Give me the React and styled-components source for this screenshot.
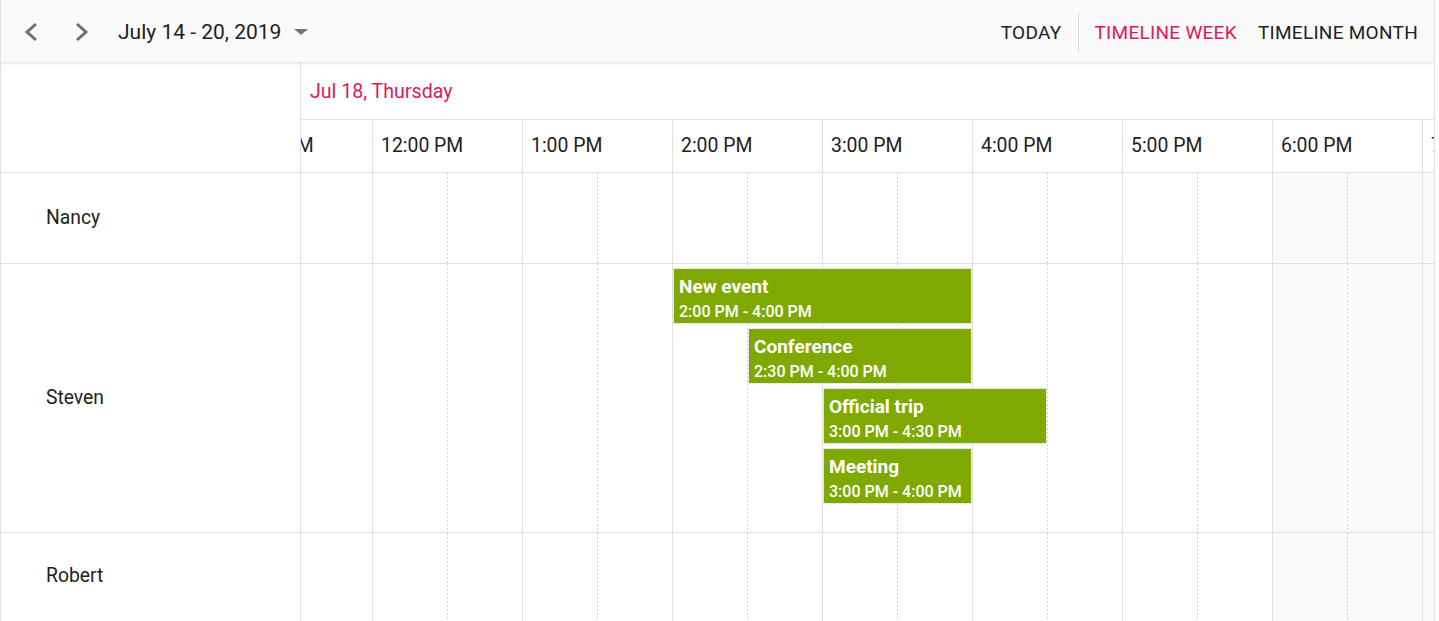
import React from "react";
import styled, { createGlobalStyle } from "styled-components";

const Global = createGlobalStyle`
  html, body { margin: 0; padding: 0; background: #fff; }
  body { font-family: Roboto, "Noto Sans", "Liberation Sans", sans-serif; color: #212121; }
  * { box-sizing: border-box; }
`;

const HOUR_W = 150;
const TRACK_OFFSET = 79;
const HOURS = ["11:00 AM", "12:00 PM", "1:00 PM", "2:00 PM", "3:00 PM", "4:00 PM", "5:00 PM", "6:00 PM", "7:00 PM", "8:00 PM"];
const OFF_FROM = 7; // index of 6:00 PM – non-working hours

const ROWS = [
  { name: "Nancy", height: 91, pb: 2 },
  { name: "Steven", height: 269, pb: 2 },
  { name: "Robert", height: 96, pb: 10 },
];

const EVENTS = [
  { subject: "New event", time: "2:00 PM - 4:00 PM", start: 3, dur: 2 },
  { subject: "Conference", time: "2:30 PM - 4:00 PM", start: 3.5, dur: 1.5 },
  { subject: "Official trip", time: "3:00 PM - 4:30 PM", start: 4, dur: 1.5 },
  { subject: "Meeting", time: "3:00 PM - 4:00 PM", start: 4, dur: 1 },
];

const Scheduler = styled.div`
  width: 1435px;
  height: 621px;
  border-left: 1px solid #e0e0e0;
  border-right: 1px solid #e0e0e0;
  overflow: hidden;
  display: flex;
  flex-direction: column;
`;

const Toolbar = styled.div`
  position: relative;
  z-index: 2;
  height: 62px;
  flex: none;
  background: #fafafa;
  box-shadow: 0 1px 3px rgba(0, 0, 0, 0.14);
  display: flex;
  align-items: center;
  padding-top: 2px;
`;

const NavButton = styled.button`
  border: none;
  background: transparent;
  padding: 0;
  margin: 0 0 0 ${(p) => p.$ml}px;
  width: 14px;
  height: 20px;
  display: flex;
  align-items: center;
  justify-content: center;
  cursor: pointer;
`;

const DateRange = styled.div`
  margin-left: 29px;
  font-size: 21px;
  color: #212121;
  display: flex;
  align-items: center;
`;

const Caret = styled.span`
  margin-left: 13px;
  width: 0;
  height: 0;
  border-left: 7px solid transparent;
  border-right: 7px solid transparent;
  border-top: 6px solid #757575;
`;

const Spacer = styled.div`
  flex: 1;
`;

const ViewButton = styled.button`
  border: none;
  background: transparent;
  font-family: Roboto, "Liberation Sans", sans-serif;
  font-size: 19px;
  letter-spacing: 0.28px;
  text-transform: uppercase;
  padding: 0;
  margin-right: ${(p) => p.$mr}px;
  color: ${(p) => (p.$active ? "#e3165b" : "#212121")};
  cursor: pointer;
`;

const Separator = styled.div`
  width: 1px;
  height: 41px;
  background: #dcdcdc;
  margin-right: 16px;
`;

const Body = styled.div`
  flex: 1;
  display: flex;
  min-height: 0;
`;

const LeftColumn = styled.div`
  width: 300px;
  flex: none;
  border-right: 1px solid #e0e0e0;
  display: flex;
  flex-direction: column;
`;

const Corner = styled.div`
  height: 111px;
  flex: none;
  border-bottom: 1px solid #e0e0e0;
`;

const ResourceCell = styled.div`
  height: ${(p) => p.$h}px;
  flex: none;
  border-bottom: 1px solid #e0e0e0;
  display: flex;
  align-items: center;
  padding: 0 0 ${(p) => p.$pb}px 45px;
  font-size: 19.3px;
  color: #212121;
`;

const RightPane = styled.div`
  flex: 1;
  min-width: 0;
  overflow: hidden;
  display: flex;
  flex-direction: column;
`;

const DateRow = styled.div`
  height: 58px;
  flex: none;
  border-bottom: 1px solid #e0e0e0;
  display: flex;
  align-items: center;
  padding: 2px 0 0 9px;
  font-size: 19.6px;
  color: #e3165b;
`;

const Track = styled.div`
  margin-left: -${TRACK_OFFSET}px;
  width: ${HOURS.length * HOUR_W}px;
  position: relative;
  display: flex;
  flex: none;
  height: ${(p) => p.$h}px;
  border-bottom: 1px solid #e0e0e0;
`;

const TimeCell = styled.div`
  width: ${HOUR_W}px;
  flex: none;
  border-left: 1px solid #e0e0e0;
  padding: 0 0 2px 8px;
  display: flex;
  align-items: center;
  font-size: 19.4px;
  color: #212121;
  white-space: nowrap;
`;

const HalfCell = styled.div`
  width: ${HOUR_W / 2}px;
  flex: none;
  background-color: ${(p) => (p.$off ? "#fafafa" : "#fff")};
  ${(p) =>
    p.$half
      ? `background-image: repeating-linear-gradient(to bottom, #d2d2d2 0, #d2d2d2 2px, transparent 2px, transparent 4px);
         background-size: 1px 100%;
         background-repeat: no-repeat;`
      : `border-left: 1px solid #e0e0e0;`}
`;

const Event = styled.div`
  position: absolute;
  background: #7fa900;
  border: 1px solid #e6e8f2;
  color: #fff;
  padding: 5px 0 0 5px;
  display: flex;
  flex-direction: column;
  overflow: hidden;
`;

const Subject = styled.div`
  font-size: 19px;
  font-weight: 700;
  line-height: 26px;
  white-space: nowrap;
`;

const EventTime = styled.div`
  margin-top: 2px;
  font-size: 16px;
  font-weight: 500;
  line-height: 20px;
  white-space: nowrap;
`;

const Chevron = ({ dir }) => (
  <svg width="14" height="20" viewBox="0 0 14 20">
    <path
      d={dir === "left" ? "M12 2 L3 10 L12 18" : "M2 2 L11 10 L2 18"}
      fill="none"
      stroke="#6f6f6f"
      strokeWidth="3"
      strokeLinejoin="miter"
    />
  </svg>
);

function Row({ height, events }) {
  const cells = [];
  HOURS.forEach((_, i) => {
    cells.push(<HalfCell key={`${i}a`} $off={i >= OFF_FROM} />);
    cells.push(<HalfCell key={`${i}b`} $half $off={i >= OFF_FROM} />);
  });
  return (
    <Track $h={height}>
      {cells}
      {events &&
        events.map((e, idx) => (
          <Event
            key={e.subject}
            style={{
              left: e.start * HOUR_W + 1,
              width: e.dur * HOUR_W - 1,
              top: 4 + idx * 60,
              height: 56,
            }}
          >
            <Subject>{e.subject}</Subject>
            <EventTime>{e.time}</EventTime>
          </Event>
        ))}
    </Track>
  );
}

export default function App() {
  return (
    <>
      <Global />
      <Scheduler>
        <Toolbar>
          <NavButton $ml={23} aria-label="Previous">
            <Chevron dir="left" />
          </NavButton>
          <NavButton $ml={37} aria-label="Next">
            <Chevron dir="right" />
          </NavButton>
          <DateRange>
            July 14 - 20, 2019
            <Caret />
          </DateRange>
          <Spacer />
          <ViewButton $mr={16}>Today</ViewButton>
          <Separator />
          <ViewButton $mr={21} $active>
            Timeline Week
          </ViewButton>
          <ViewButton $mr={16}>Timeline Month</ViewButton>
        </Toolbar>
        <Body>
          <LeftColumn>
            <Corner />
            {ROWS.map((r) => (
              <ResourceCell key={r.name} $h={r.height} $pb={r.pb}>
                {r.name}
              </ResourceCell>
            ))}
          </LeftColumn>
          <RightPane>
            <DateRow>Jul 18, Thursday</DateRow>
            <Track $h={53}>
              {HOURS.map((h) => (
                <TimeCell key={h}>{h}</TimeCell>
              ))}
            </Track>
            {ROWS.map((r) => (
              <Row
                key={r.name}
                height={r.height}
                events={r.name === "Steven" ? EVENTS : null}
              />
            ))}
          </RightPane>
        </Body>
      </Scheduler>
    </>
  );
}
